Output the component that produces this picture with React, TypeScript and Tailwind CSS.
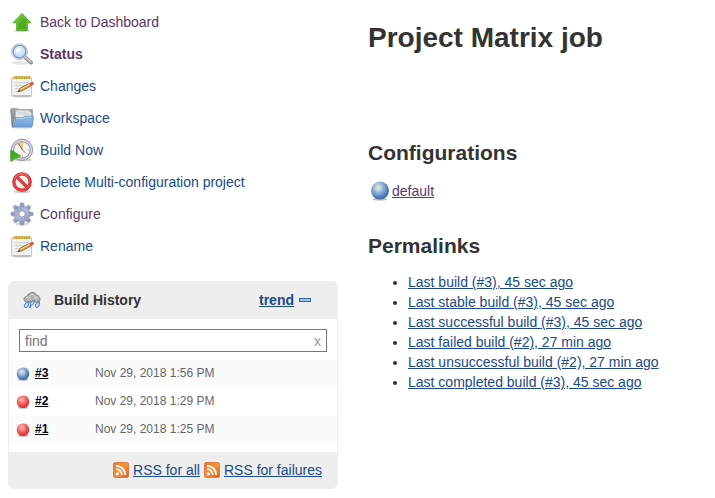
import type { ReactNode } from "react";

interface Task {
  label: string;
  icon: ReactNode;
  visited?: boolean;
  current?: boolean;
}

interface Build {
  id: string;
  date: string;
  status: "blue" | "red";
}

function UpArrowIcon() {
  return (
    <svg viewBox="0 0 24 24" className="h-6 w-6 shrink-0" aria-hidden="true">
      <defs>
        <linearGradient id="arrow-green" x1="0" y1="0" x2="1" y2="1">
          <stop offset="0" stopColor="#86d23f" />
          <stop offset="0.5" stopColor="#4fae1c" />
          <stop offset="1" stopColor="#43a312" />
        </linearGradient>
      </defs>
      <ellipse cx="12" cy="20.7" rx="8.5" ry="1.4" fill="#000" opacity="0.15" />
      <path d="M12 3.5 21 12.8H17.3V20.4H6.7V12.8H3Z" fill="url(#arrow-green)" stroke="#4b9e20" strokeWidth="0.9" strokeLinejoin="round" />
      <path d="M12 5 18.6 11.9H16.3V19.4H7.7V11.9H5.4Z" fill="none" stroke="#a5e56e" strokeWidth="0.6" opacity="0.6" />
    </svg>
  );
}

function SearchIcon() {
  return (
    <svg viewBox="0 0 24 24" className="h-6 w-6 shrink-0" aria-hidden="true">
      <defs>
        <radialGradient id="lens" cx="0.45" cy="0.4" r="0.65">
          <stop offset="0" stopColor="#eef6ff" />
          <stop offset="0.6" stopColor="#cfe2f7" />
          <stop offset="1" stopColor="#a9c8ec" />
        </radialGradient>
      </defs>
      <ellipse cx="11" cy="20.8" rx="9" ry="2" fill="#000" opacity="0.1" />
      <path d="M15.3 15.3 21 20.6" stroke="#858788" strokeWidth="3.8" strokeLinecap="round" />
      <path d="M15.2 15 20.8 20.2" stroke="#c9cac9" strokeWidth="1.8" strokeLinecap="round" />
      <circle cx="9.5" cy="9.7" r="7.9" fill="#e4e6e8" stroke="#b0b3b6" strokeWidth="0.8" />
      <circle cx="9.5" cy="9.7" r="6.4" fill="url(#lens)" stroke="#6593cf" strokeWidth="1.1" />
      <path d="M5.4 9.6C5.8 6.6 8.2 5 11.8 5.4 9.6 6.6 8 8 7 10.8Z" fill="#fff" opacity="0.8" />
    </svg>
  );
}

function NotepadIcon() {
  return (
    <svg viewBox="0 0 24 24" className="h-6 w-6 shrink-0" aria-hidden="true">
      <ellipse cx="12" cy="22" rx="10.8" ry="1.3" fill="#000" opacity="0.25" />
      <rect x="1.6" y="3.8" width="20" height="17.8" rx="0.8" fill="#f3f3f1" stroke="#b3b3af" strokeWidth="0.8" />
      <path d="M5 8.7H18.5M5 11.6H16M5 14.5H10M5 17.4H9" stroke="#c5c6c4" strokeWidth="0.9" />
      <path d="M3.7 2.2H20.3V5H3.7Z" fill="#b39a2b" />
      <path d="M5.2 1.6V5.2M7.8 1.6V5.2M10.4 1.6V5.2M13 1.6V5.2M15.6 1.6V5.2M18.2 1.6V5.2" stroke="#e4d162" strokeWidth="1" />
      <path d="M7.8 17.8 10.2 14.2 19.8 9.2 21.2 11.9 11.6 17Z" fill="#e0a552" stroke="#876434" strokeWidth="0.8" />
      <path d="M10.6 15.2 20.2 10.2" stroke="#f8d293" strokeWidth="0.9" />
      <path d="M7.8 17.8 9 15.9 10.2 17.3Z" fill="#2b2b2b" />
      <path d="M19.6 9.2 21.8 8.2Q23.4 7.8 23.8 9.1 24 10.4 23 11L21 12Z" fill="#dc5040" />
    </svg>
  );
}

function FolderIcon() {
  return (
    <svg viewBox="0 0 24 24" className="h-6 w-6 shrink-0" aria-hidden="true">
      <defs>
        <linearGradient id="folder-back" x1="0" y1="0" x2="0" y2="1">
          <stop offset="0" stopColor="#a4a8aa" />
          <stop offset="1" stopColor="#73797d" />
        </linearGradient>
        <linearGradient id="folder-front" x1="0" y1="0" x2="0" y2="1">
          <stop offset="0" stopColor="#94bbe3" />
          <stop offset="1" stopColor="#6c9fd6" />
        </linearGradient>
      </defs>
      <ellipse cx="12" cy="21.4" rx="11" ry="1.2" fill="#000" opacity="0.2" />
      <path d="M0.5 3.4 1.4 2.4H7L8 3.4H22.4V13H4L3 20.8H2Z" fill="url(#folder-back)" stroke="#7d8386" strokeWidth="0.6" />
      <path d="M6 4.2H18L21.4 6.8V16H5Z" fill="#e8e9ea" stroke="#b5b8ba" strokeWidth="0.6" />
      <path d="M7.5 6.2H17M7.5 8.2H19" stroke="#c3c7ca" strokeWidth="0.7" />
      <path d="M5.4 11.8H13L14.5 10.2H23.5L22.4 19.7Q22.2 20.8 21 20.8H2.8Q4 20.5 4.3 19Z" fill="url(#folder-front)" stroke="#4c7fba" strokeWidth="0.7" />
      <path d="M6.2 12.6H13.4L15 11H22.6" fill="none" stroke="#c5dff7" strokeWidth="0.7" />
    </svg>
  );
}

function ClockIcon() {
  return (
    <svg viewBox="0 0 24 24" className="h-6 w-6 shrink-0" aria-hidden="true">
      <defs>
        <linearGradient id="play-green" x1="0" y1="0" x2="1" y2="1">
          <stop offset="0" stopColor="#35a01a" />
          <stop offset="1" stopColor="#5cbf2b" />
        </linearGradient>
      </defs>
      <ellipse cx="13" cy="22" rx="9" ry="1.5" fill="#000" opacity="0.18" />
      <circle cx="12" cy="11.8" r="10.6" fill="#dcdde6" stroke="#85869a" strokeWidth="0.9" />
      <circle cx="12" cy="11.8" r="8.3" fill="#f4f4ef" stroke="#9a9bb0" strokeWidth="1.2" />
      <path d="M8.2 5.3Q10.5 4 13 4.6L12.3 11.8Z" fill="#e9d27a" stroke="#c6ab4c" strokeWidth="0.5" />
      <path d="M8.6 5.6 12.3 11.8 15.4 14.8" fill="none" stroke="#5b5c66" strokeWidth="0.9" />
      <circle cx="18.2" cy="11.8" r="0.5" fill="#777" />
      <circle cx="12.5" cy="18" r="0.5" fill="#777" />
      <path d="M0.6 12 10.8 17.8 0.6 23.6Z" fill="url(#play-green)" stroke="#389a1d" strokeWidth="0.6" />
    </svg>
  );
}

function DeleteIcon() {
  return (
    <svg viewBox="0 0 24 24" className="h-6 w-6 shrink-0" aria-hidden="true">
      <ellipse cx="12" cy="21.8" rx="8.5" ry="1.4" fill="#000" opacity="0.2" />
      <circle cx="12" cy="12" r="8.2" fill="#f2f0f0" stroke="#c8282a" strokeWidth="3.2" />
      <path d="M6.4 6.4 17.6 17.6" stroke="#c8282a" strokeWidth="3.2" />
      <circle cx="12" cy="12" r="8.2" fill="none" stroke="#e2413f" strokeWidth="2.2" />
      <path d="M6.4 6.4 17.6 17.6" stroke="#e2413f" strokeWidth="2.2" />
      <path d="M4.2 9.5A8.3 8.3 0 0 1 18 6.4" fill="none" stroke="#f18a85" strokeWidth="0.8" />
    </svg>
  );
}

function GearIcon() {
  const teeth = [0, 45, 90, 135, 180, 225, 270, 315];

  return (
    <svg viewBox="0 0 24 24" className="h-6 w-6 shrink-0" aria-hidden="true">
      <defs>
        <linearGradient id="gear-blue" gradientUnits="userSpaceOnUse" x1="4" y1="2" x2="20" y2="22">
          <stop offset="0" stopColor="#8594bb" />
          <stop offset="0.5" stopColor="#b3bcd6" />
          <stop offset="1" stopColor="#8793b3" />
        </linearGradient>
      </defs>
      <ellipse cx="12" cy="22" rx="7" ry="1.3" fill="#000" opacity="0.15" />
      {teeth.map((angle) => (
        <path
          key={angle}
          d="M9.4 5.8 10.5 1.2Q12 0.4 13.5 1.2L14.6 5.8Z"
          transform={`rotate(${angle} 12 12)`}
          fill="#94a1c4"
          stroke="#7886ad"
          strokeWidth="0.6"
        />
      ))}
      <circle cx="12" cy="12" r="5.3" fill="none" stroke="#7b89af" strokeWidth="5" />
      <circle cx="12" cy="12" r="5.4" fill="none" stroke="url(#gear-blue)" strokeWidth="4.4" />
      <circle cx="12" cy="12" r="3" fill="#fff" stroke="#7c89aa" strokeWidth="0.6" />
    </svg>
  );
}

function WeatherIcon() {
  return (
    <svg viewBox="0 0 18 18" className="h-[18px] w-[18px] shrink-0" aria-hidden="true">
      <path
        d="M3.5 11Q0.8 10.6 0.9 8 1.3 5.6 3.8 5.5 4.4 3 6.8 2.6 8 1 10 1.3 12.4 1.5 13 4.1 15.7 4 16.2 6.3 18 8 16.6 10 15.7 11.1 14 11Z"
        fill="#b5b6b2"
        stroke="#7c7d7a"
        strokeWidth="0.9"
      />
      <path d="M3 7Q5 5 7 6.7M7 4.6Q10 2 11.7 5.5M11 7.3Q13 4.8 15 7" fill="none" stroke="#dbdbd7" strokeWidth="1" />
      <g fill="#c6daf1" stroke="#4a7abb" strokeWidth="1">
        <path d="M6 10.6Q2.3 11.6 1.3 14 .8 16.6 3.2 16.6 5.8 16 6 10.6Z" />
        <path d="M11.3 9.2Q8 10.2 7.3 12.3 7 14.3 9 14.3 11.1 13.8 11.3 9.2Z" />
        <path d="M16.5 10.6Q13.3 11.6 12.4 14 12 16.6 14.2 16.6 16.6 16 16.5 10.6Z" />
        <path d="M8 14.6Q6.2 15 6.2 16.4 7.7 17.5 8 14.6Z" />
      </g>
    </svg>
  );
}

function BlueBall({ className }: { className: string }) {
  return (
    <svg viewBox="0 0 20 20" className={className} aria-hidden="true">
      <defs>
        <radialGradient id="ball-blue" cx="0.4" cy="0.34" r="0.68">
          <stop offset="0" stopColor="#e8f0e4" />
          <stop offset="0.35" stopColor="#a3bedb" />
          <stop offset="0.75" stopColor="#4f80bd" />
          <stop offset="1" stopColor="#3a68a5" />
        </radialGradient>
      </defs>
      <ellipse cx="10" cy="18.3" rx="7.5" ry="1.5" fill="#000" opacity="0.25" />
      <circle cx="10" cy="9.6" r="9" fill="url(#ball-blue)" />
    </svg>
  );
}

function RedBall({ className }: { className: string }) {
  return (
    <svg viewBox="0 0 20 20" className={className} aria-hidden="true">
      <defs>
        <radialGradient id="ball-red" cx="0.4" cy="0.32" r="0.68">
          <stop offset="0" stopColor="#ffc4c0" />
          <stop offset="0.35" stopColor="#f67f7d" />
          <stop offset="0.75" stopColor="#ec4245" />
          <stop offset="1" stopColor="#cb3338" />
        </radialGradient>
      </defs>
      <ellipse cx="10" cy="18.3" rx="7.5" ry="1.5" fill="#000" opacity="0.25" />
      <circle cx="10" cy="9.6" r="9" fill="url(#ball-red)" />
    </svg>
  );
}

function RssIcon() {
  return (
    <svg viewBox="0 0 16 16" className="h-4 w-4 shrink-0" aria-hidden="true">
      <defs>
        <linearGradient id="rss-orange" x1="0" y1="0" x2="1" y2="1">
          <stop offset="0" stopColor="#e87832" />
          <stop offset="0.5" stopColor="#f7923a" />
          <stop offset="1" stopColor="#d85d24" />
        </linearGradient>
      </defs>
      <rect x="0.4" y="0.4" width="15.2" height="15.2" rx="2" fill="url(#rss-orange)" stroke="#d7672e" strokeWidth="0.8" />
      <circle cx="4.4" cy="11.7" r="1.5" fill="#fff" />
      <path d="M3 7.2A5.8 5.8 0 0 1 8.8 13M3 3.8A9.2 9.2 0 0 1 12.2 13" fill="none" stroke="#fff" strokeWidth="1.8" />
    </svg>
  );
}

const tasks: Task[] = [
  { label: "Back to Dashboard", icon: <UpArrowIcon />, visited: true },
  { label: "Status", icon: <SearchIcon />, visited: true, current: true },
  { label: "Changes", icon: <NotepadIcon /> },
  { label: "Workspace", icon: <FolderIcon /> },
  { label: "Build Now", icon: <ClockIcon /> },
  { label: "Delete Multi-configuration project", icon: <DeleteIcon /> },
  { label: "Configure", icon: <GearIcon />, visited: true },
  { label: "Rename", icon: <NotepadIcon /> },
];

const builds: Build[] = [
  { id: "#3", date: "Nov 29, 2018 1:56 PM", status: "blue" },
  { id: "#2", date: "Nov 29, 2018 1:29 PM", status: "red" },
  { id: "#1", date: "Nov 29, 2018 1:25 PM", status: "red" },
];

const permalinks = [
  "Last build (#3), 45 sec ago",
  "Last stable build (#3), 45 sec ago",
  "Last successful build (#3), 45 sec ago",
  "Last failed build (#2), 27 min ago",
  "Last unsuccessful build (#2), 27 min ago",
  "Last completed build (#3), 45 sec ago",
];

function TaskList() {
  return (
    <nav>
      <ul>
        {tasks.map((task) => (
          <li key={task.label}>
            <a
              href="#"
              className={`flex h-8 items-center gap-1.5 pl-0.5 ${task.visited ? "text-[#5c3566]" : "text-[#204a87]"} ${task.current ? "font-bold" : ""}`}
            >
              {task.icon}
              {task.label}
            </a>
          </li>
        ))}
      </ul>
    </nav>
  );
}

function BuildHistory() {
  return (
    <section className="mt-[19px] overflow-hidden rounded-md border border-[#eeeeee]">
      <header className="flex h-[37px] items-center bg-[#eeeeee] pr-[26px] pb-px pl-3.5">
        <WeatherIcon />
        <h2 className="ml-[13px] font-bold">Build History</h2>
        <a href="#" className="ml-auto font-bold text-[#204a87] underline">
          trend
        </a>
        <button aria-label="Collapse" className="ml-[5px] h-1 w-3 border border-[#3465a4] bg-[#a6c5e3]" />
      </header>

      <div className="px-2.5 pt-2.5 pb-2">
        <div className="flex h-[23px] items-center border border-[#767676] bg-white px-[5px]">
          <input
            type="text"
            aria-label="Find in build history"
            placeholder="find"
            className="min-w-0 flex-1 outline-none placeholder:text-[#757575]"
          />
          <button aria-label="Clear" className="text-sm text-[#999999]">
            x
          </button>
        </div>
      </div>

      <table className="w-full text-left text-xs">
        <tbody>
          {builds.map((build) => (
            <tr key={build.id} className="h-7 odd:bg-[#fbfbfb]">
              <td className="w-[26px] pl-[7px]">
                {build.status === "blue" ? <BlueBall className="h-3.5 w-3.5" /> : <RedBall className="h-3.5 w-3.5" />}
              </td>
              <td className="w-[60px] pb-0.5">
                <a href="#" className="font-bold text-black underline">
                  {build.id}
                </a>
              </td>
              <td className="pb-0.5 text-[#666666]">{build.date}</td>
            </tr>
          ))}
        </tbody>
      </table>

      <footer className="mt-2 flex h-9 items-center justify-end gap-1 bg-[#eeeeee] pr-[15px] text-[#204a87]">
        <RssIcon />
        <a href="#" className="underline">
          RSS for all
        </a>
        <RssIcon />
        <a href="#" className="underline">
          RSS for failures
        </a>
      </footer>
    </section>
  );
}

export default function App() {
  return (
    <div className="flex min-h-screen bg-white px-2 pt-1.5 font-['Liberation_Sans',Arial,sans-serif] text-sm text-[#333333]">
      <aside className="w-[330px] shrink-0">
        <TaskList />
        <BuildHistory />
      </aside>

      <main className="min-w-0 flex-1 pt-3.5 pl-[30px]">
        <h1 className="text-[28px] leading-9 font-bold">Project Matrix job</h1>

        <h2 className="mt-[83px] text-[21px] leading-7 font-bold">Configurations</h2>
        <div className="mt-3.5 flex items-center gap-0.5 pl-0.5">
          <BlueBall className="h-5 w-5" />
          <a href="#" className="text-[#5c3566] underline">
            default
          </a>
        </div>

        <h2 className="mt-[31px] text-[21px] leading-7 font-bold">Permalinks</h2>
        <ul className="mt-3 list-disc pl-10">
          {permalinks.map((link) => (
            <li key={link}>
              <a href="#" className="text-[#204a87] underline">
                {link}
              </a>
            </li>
          ))}
        </ul>
      </main>
    </div>
  );
}
